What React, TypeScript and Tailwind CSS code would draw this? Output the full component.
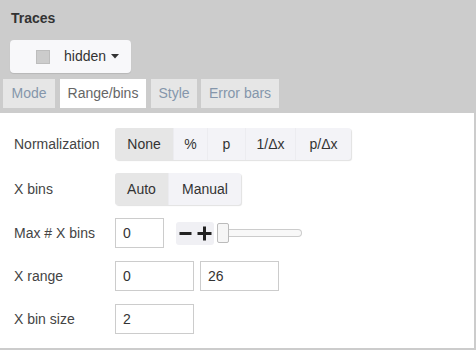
import React from "react";

const normOptions = ["None", "%", "p", "1/Δx", "p/Δx"];
const normWidths = ["w-[58px]", "w-[34px]", "w-[38px]", "w-[50px]", "w-[56px]"];

function Segmented({ items, widths, active }: { items: string[]; widths: string[]; active: number }) {
  return (
    <div className="flex h-[32px] rounded-[3px] bg-[#f3f3f7] shadow-[1px_1px_1px_rgba(0,0,0,0.12)]">
      {items.map((item, i) => (
        <div
          key={item}
          className={`${widths[i]} flex items-center justify-center text-[14px] text-[#333] ${
            i === active ? "bg-[#e6e6e6] rounded-l-[3px]" : ""
          } ${i > 0 ? "border-l border-[#ececf0]" : ""}`}
        >
          {item}
        </div>
      ))}
    </div>
  );
}

function Field({ value, width }: { value: string; width: string }) {
  return (
    <div className={`${width} h-[30px] border border-[#cccccc] bg-white flex items-center pl-[7px] text-[14px] text-[#333]`}>
      {value}
    </div>
  );
}

function Row({ label, children, className = "" }: { label: string; children: React.ReactNode; className?: string }) {
  return (
    <div className={`flex items-center ${className}`}>
      <div className="w-[115px] pl-[14px] text-[14px] text-[#444] shrink-0">{label}</div>
      {children}
    </div>
  );
}

export default function App() {
  return (
    <div className="w-[476px] h-[350px] bg-[#cccccc] overflow-hidden" style={{ fontFamily: '"Liberation Sans", Arial, sans-serif' }}>
      {/* Header */}
      <div className="pt-[10px] pl-[11px] text-[14px] leading-[16px] font-bold text-[#333]">Traces</div>
      <div className="pl-[10px] pt-[14px]">
        <div className="w-[121px] h-[33px] bg-[#f8f8fa] rounded-[4px] shadow-[0_1px_1px_rgba(0,0,0,0.1)] flex items-center pl-[26px]">
          <div className="w-[14px] h-[14px] bg-[#cccccc] border border-[#bdbdbd]" />
          <span className="ml-[14px] text-[14px] text-[#333]">hidden</span>
          <svg className="ml-[5px]" width="8" height="5" viewBox="0 0 8 5">
            <path d="M0 0 L8 0 L4 4.5 Z" fill="#333" />
          </svg>
        </div>
      </div>

      {/* Tabs */}
      <div className="flex pl-[3px] pt-[6px] h-[40px] text-[14px]">
        <div className="h-[29px] w-[52px] bg-[#e6e6e6] text-[#8596ab] flex items-center justify-center">Mode</div>
        <div className="h-[29px] w-[86px] ml-[5px] bg-white text-[#666] flex items-center justify-center">Range/bins</div>
        <div className="h-[29px] w-[46px] ml-[5px] bg-[#e6e6e6] text-[#8596ab] flex items-center justify-center">Style</div>
        <div className="h-[29px] w-[78px] ml-[4px] bg-[#e6e6e6] text-[#8596ab] flex items-center justify-center">Error bars</div>
      </div>

      {/* Panel */}
      <div className="w-[474px] h-[235px] bg-white pt-[15px]">
        <Row label="Normalization">
          <Segmented items={normOptions} widths={normWidths} active={0} />
        </Row>
        <Row label="X bins" className="mt-[13px]">
          <Segmented items={["Auto", "Manual"]} widths={["w-[53px]", "w-[73px]"]} active={0} />
        </Row>
        <Row label="Max # X bins" className="mt-[13px]">
          <Field value="0" width="w-[49px]" />
          <div className="ml-[12px] flex h-[23px] rounded-[3px] bg-[#f0f0f4]">
            <div className="w-[19px] flex items-center justify-center">
              <svg width="13" height="13" viewBox="0 0 13 13">
                <rect x="0.5" y="5" width="12" height="3" fill="#222" />
              </svg>
            </div>
            <div className="w-[19px] flex items-center justify-center">
              <svg width="15" height="15" viewBox="0 0 15 15">
                <rect x="0.5" y="6" width="14" height="3" fill="#222" />
                <rect x="6" y="0.5" width="3" height="14" fill="#222" />
              </svg>
            </div>
          </div>
          <div className="ml-[3px] flex items-center">
            <div className="w-[12px] h-[20px] bg-[#f6f6f6] border border-[#bbbbbb] rounded-[2px]" />
            <div className="w-[73px] h-[8px] border border-[#cccccc] border-l-0 rounded-r-[4px] bg-[#f8f8f8]" />
          </div>
        </Row>
        <Row label="X range" className="mt-[13px]">
          <Field value="0" width="w-[79px]" />
          <div className="ml-[6px]">
            <Field value="26" width="w-[79px]" />
          </div>
        </Row>
        <Row label="X bin size" className="mt-[13px]">
          <Field value="2" width="w-[79px]" />
        </Row>
      </div>
    </div>
  );
}
